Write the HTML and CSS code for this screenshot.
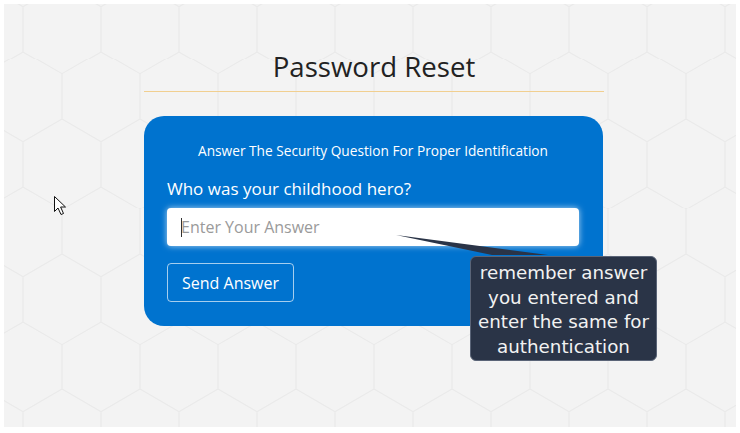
FILE: index.html
```html
<!DOCTYPE html>
<html lang="en">
<head>
<meta charset="utf-8">
<title>Password Reset</title>
<link rel="stylesheet" href="styles.css">
</head>
<body>
<div class="page">
  <svg class="cursor" width="14" height="21" viewBox="0 0 14 21" aria-hidden="true">
    <path d="M1.5 1.5 L1.5 16.5 L5 13 L8 19.5 L10.5 18.5 L7.6 12 L12.5 12 Z" fill="#fff" stroke="#111" stroke-width="1" stroke-linejoin="miter"/>
  </svg>
  <div class="column">
    <h1 class="title">Password Reset</h1>
    <div class="card">
      <p class="subtitle">Answer The Security Question For Proper Identification</p>
      <label class="question" for="answer">Who was your childhood hero?</label>
      <div class="field"><span class="caret"></span><input id="answer" class="answer" type="text" placeholder="Enter Your Answer"></div>
      <button class="send" type="button">Send Answer</button>
      <svg class="pointer" width="160" height="24" viewBox="0 0 160 24" aria-hidden="true">
        <polygon points="0,2 96,22 152,22" fill="#2a3447"/>
      </svg>
      <div class="tip">remember answer you entered and enter the same for authentication</div>
    </div>
  </div>
</div>
</body>
</html>
```

FILE: styles.css
```css
html, body {
  margin: 0;
  padding: 0;
  background: #ffffff;
}

.page {
  position: relative;
  margin: 4px 4px 0 4px;
  width: 732px;
  height: 423px;
  background-color: #f3f3f3;
  background-image: url("data:image/svg+xml,%3Csvg xmlns='http://www.w3.org/2000/svg' width='78' height='135.1'%3E%3Cg fill='none' stroke='%23eaeaea' stroke-width='1.2'%3E%3Cpath d='M0 22.52 L39 0 L78 22.52 M0 22.52 L0 67.55 M78 22.52 L78 67.55 M0 67.55 L39 90.07 L78 67.55 M39 90.07 L39 135.1'/%3E%3C/g%3E%3C/svg%3E");
  background-position: 19px -20px;
  font-family: "Open Sans", "Noto Sans", sans-serif;
  overflow: hidden;
}

.cursor {
  position: absolute;
  left: 49px;
  top: 191px;
}

.column {
  width: 460px;
  margin-left: 140px;
  padding-top: 43px;
}

.title {
  margin: 0;
  font-weight: 400;
  font-size: 27.6px;
  line-height: 38px;
  color: #222;
  text-align: center;
  padding-bottom: 6px;
  border-bottom: 1px solid #f1cf90;
}

.card {
  position: relative;
  margin-top: 24px;
  width: 459px;
  height: 210px;
  box-sizing: border-box;
  background: #0073cf;
  border-radius: 20px;
  padding: 25px 24px 0 23px;
  display: flex;
  flex-direction: column;
  align-items: flex-start;
}

.subtitle {
  margin: 0;
  align-self: stretch;
  text-align: center;
  color: #fff;
  font-size: 13.7px;
  line-height: 20px;
}

.question {
  margin-top: 17px;
  color: #fff;
  font-size: 17px;
  line-height: 22px;
}

.field {
  position: relative;
  margin-top: 8px;
  align-self: stretch;
}

.answer {
  display: block;
  width: 100%;
  height: 38px;
  box-sizing: border-box;
  border: none;
  border-radius: 4px;
  background: #fff;
  box-shadow: 0 0 6px rgba(255, 255, 255, 0.7);
  padding: 0 14px;
  font-family: "Open Sans", "Noto Sans", sans-serif;
  font-size: 16px;
  color: #333;
  outline: none;
}

.answer::placeholder {
  color: #9a9a9a;
}

.caret {
  position: absolute;
  left: 14px;
  top: 10px;
  width: 1px;
  height: 19px;
  background: #333;
}

.send {
  margin-top: 17px;
  height: 39px;
  padding: 0 14px;
  background: transparent;
  border: 1px solid rgba(255, 255, 255, 0.65);
  border-radius: 4px;
  color: #fff;
  font-family: "Open Sans", "Noto Sans", sans-serif;
  font-size: 16px;
}

.pointer {
  position: absolute;
  left: 252px;
  top: 117px;
}

.tip {
  position: absolute;
  left: 326px;
  top: 140px;
  width: 187px;
  height: 105px;
  box-sizing: border-box;
  padding: 4px 3px;
  background: #2a3447;
  border: 1px solid #5a6477;
  border-radius: 6px;
  color: #f2f2f2;
  font-family: "DejaVu Sans", sans-serif;
  font-size: 18.3px;
  line-height: 24.5px;
  text-align: center;
}
```
